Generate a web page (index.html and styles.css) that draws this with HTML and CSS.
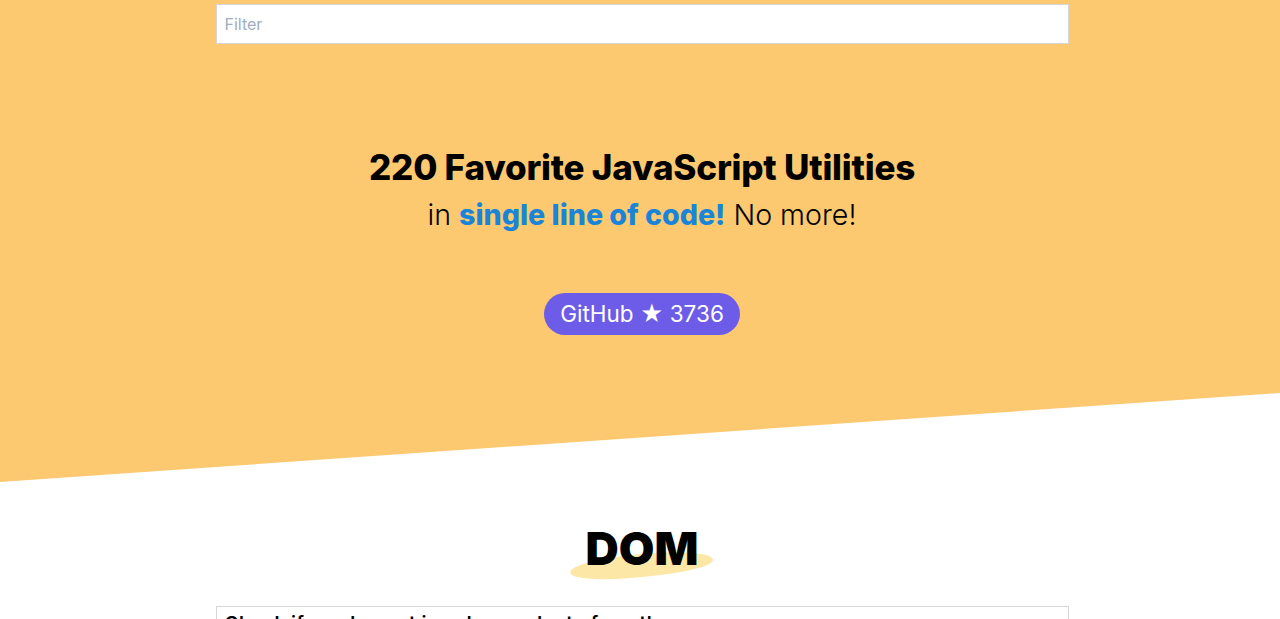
FILE: index.html
```html
<!DOCTYPE html>
<html lang="en">
<head>
<meta charset="utf-8">
<title>1 LOC</title>
<link rel="stylesheet" href="styles.css">
</head>
<body>
<header class="hero">
  <div class="wrap">
    <input class="filter" type="text" placeholder="Filter">
  </div>
  <h1 class="title">220 Favorite JavaScript Utilities</h1>
  <p class="subtitle">in <strong class="accent">single line of code!</strong> No more!</p>
  <div class="cta">
    <a class="github" href="#">GitHub ★ 3736</a>
  </div>
</header>
<main class="content">
  <h2 class="category"><span class="category-text">DOM</span></h2>
  <div class="wrap">
    <div class="card">
      <span class="card-title">Check if an element is a descendant of another</span>
      <span class="card-more">···</span>
    </div>
  </div>
</main>
</body>
</html>
```
FILE: styles.css
```css
* { box-sizing: border-box; }
html, body { margin: 0; padding: 0; }
body {
  font-family: Inter, "Noto Sans", sans-serif;
  color: #000;
  background: #fff;
  overflow: hidden;
}
.hero {
  background: #fcc970;
  height: 482px;
  clip-path: polygon(0 0, 100% 0, 100% 393px, 0 482px);
  padding: 4px 0 0 4px;
  text-align: center;
}
.wrap {
  width: 853px;
  margin: 0 auto;
}
.filter {
  display: block;
  width: 100%;
  height: 40px;
  border: 1px solid #d6d6d6;
  background: #fff;
  padding: 0 8px;
  font-family: Inter, sans-serif;
  font-size: 16px;
  outline: none;
}
.filter::placeholder { color: #a0aec0; }
.title {
  margin: 102px 0 0;
  font-size: 35px;
  line-height: 42px;
  font-weight: 800;
  letter-spacing: -0.2px;
}
.subtitle {
  margin: 7px 0 0;
  font-size: 28.6px;
  line-height: 40px;
  font-weight: 300;
}
.accent {
  color: #1a85d8;
  font-weight: 800;
}
.cta {
  margin-top: 58px;
}
.github {
  display: inline-block;
  background: #6c5ce7;
  color: #fff;
  text-decoration: none;
  font-size: 22.5px;
  line-height: 42px;
  height: 42px;
  padding: 0 16px;
  border-radius: 21px;
}
.content {
  margin-top: 42px;
  padding-left: 4px;
}
.category {
  margin: 0;
  text-align: center;
  font-size: 46px;
  line-height: 48px;
  font-weight: 900;
}
.category-text {
  position: relative;
  display: inline-block;
  z-index: 0;
}
.category-text::before {
  content: "";
  position: absolute;
  left: -16px;
  right: -14px;
  top: 30px;
  height: 23px;
  background: #fde7a6;
  border-radius: 50% 60% 45% 55%;
  transform: rotate(-6deg);
  z-index: -1;
}
.card {
  margin-top: 34px;
  border: 1px solid #d6d6d6;
  height: 60px;
  padding: 7px 8px;
  display: flex;
  justify-content: space-between;
  font-size: 19px;
  line-height: 20px;
}
.card-title { font-weight: 600; letter-spacing: 0.5px; }
.card-more { color: #666; }
```
